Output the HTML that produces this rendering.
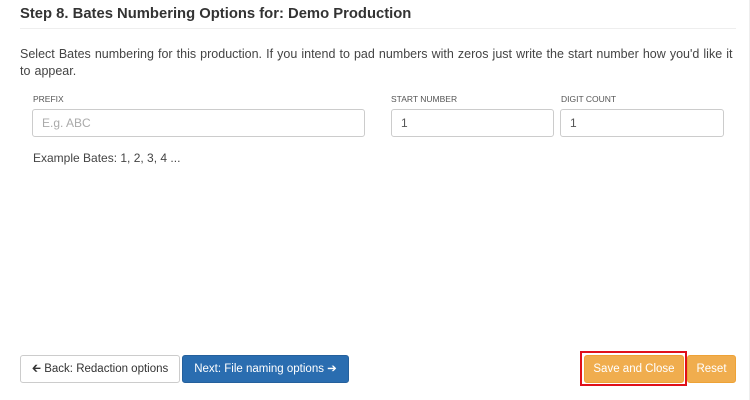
<!DOCTYPE html>
<html><head><style>
body{margin:0;width:750px;height:400px;background:#fff;font-family:"Liberation Sans",sans-serif;position:relative;overflow:hidden;color:#333}
.a{position:absolute}
h1{position:absolute;left:20px;top:6px;margin:0;font-size:14.8px;font-weight:bold;color:#333}
.hr{left:20px;top:28px;width:716px;height:1px;background:#eee}
.p{left:20px;top:46px;width:720px;font-size:12.5px;line-height:17px;color:#444;word-spacing:0.6px}
.lbl{font-size:8.5px;color:#555;top:94px}
.in{border:1px solid #ccc;border-radius:3px;top:109px;font-size:12px;line-height:26px;padding-left:9px;box-sizing:border-box;height:28px}
.btn{top:355px;height:28px;box-sizing:border-box;border-radius:3px;font-size:11.5px;line-height:26px;text-align:center}
</style></head><body>
<h1>Step 8. Bates Numbering Options for: Demo Production</h1>
<div class="a hr"></div>
<div class="a p">Select Bates numbering for this production. If you intend to pad numbers with zeros just write the start number how you'd like it<br>to appear.</div>
<div class="a lbl" style="left:33px">PREFIX</div>
<div class="a lbl" style="left:391px">START NUMBER</div>
<div class="a lbl" style="left:561px">DIGIT COUNT</div>
<div class="a in" style="left:32px;width:333px;color:#aaa">E.g. ABC</div>
<div class="a in" style="left:391px;width:163px;color:#555">1</div>
<div class="a in" style="left:560px;width:164px;color:#555">1</div>
<div class="a" style="left:33px;top:151px;font-size:12px;color:#444">Example Bates: 1, 2, 3, 4 ...</div>
<div class="a btn" style="left:20px;width:160px;border:1px solid #ccc;color:#333">&#129136; Back: Redaction options</div>
<div class="a btn" style="left:182px;width:167px;background:#2a6db0;border:1px solid #25609c;color:#fff">Next: File naming options &#10132;</div>
<div class="a" style="left:580px;top:351px;width:107px;height:35px;border:2px solid #e0101a;box-sizing:border-box"></div>
<div class="a btn" style="left:584px;width:100px;background:#f0ad4e;border:1px solid #eea236;color:#fff">Save and Close</div>
<div class="a btn" style="left:687px;width:49px;background:#f0ad4e;border:1px solid #eea236;color:#fff">Reset</div>
<div class="a" style="left:749px;top:0;width:1px;height:400px;background:#eee"></div>
</body></html>
